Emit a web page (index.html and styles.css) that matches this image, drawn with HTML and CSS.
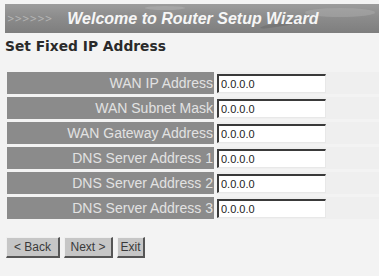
FILE: index.html
```html
<!DOCTYPE html>
<html>
<head>
<meta charset="utf-8">
<link rel="stylesheet" href="styles.css">
</head>
<body>
<div class="page">
  <div class="banner">
    <span class="arrows">&gt;&gt;&gt;&gt;&gt;&gt;</span>
    <span class="title">Welcome to Router Setup Wizard</span>
    <span class="streak s1"></span>
    <span class="streak s2"></span>
    <span class="streak s3"></span>
  </div>
  <h1 class="heading">Set Fixed IP Address</h1>
  <div class="form">
    <div class="row"><div class="label">WAN IP Address</div><div class="field"><input class="ip" value="0.0.0.0"></div></div>
    <div class="row"><div class="label">WAN Subnet Mask</div><div class="field"><input class="ip" value="0.0.0.0"></div></div>
    <div class="row"><div class="label">WAN Gateway Address</div><div class="field"><input class="ip" value="0.0.0.0"></div></div>
    <div class="row"><div class="label">DNS Server Address 1</div><div class="field"><input class="ip" value="0.0.0.0"></div></div>
    <div class="row"><div class="label">DNS Server Address 2</div><div class="field"><input class="ip" value="0.0.0.0"></div></div>
    <div class="row"><div class="label">DNS Server Address 3</div><div class="field"><input class="ip" value="0.0.0.0"></div></div>
  </div>
  <div class="buttons">
    <button class="btn b-back">&lt; Back</button>
    <button class="btn b-next">Next &gt;</button>
    <button class="btn b-exit">Exit</button>
  </div>
</div>
</body>
</html>
```
FILE: styles.css
```css
html, body {
  margin: 0;
  padding: 0;
  background: #f3f3f3;
}
.page {
  width: 379px;
  height: 276px;
  padding: 4px 0 0 5px;
  box-sizing: border-box;
  overflow: hidden;
  font-family: "Liberation Sans", Arial, sans-serif;
}
.banner {
  position: relative;
  height: 29px;
  display: flex;
  align-items: center;
  background: linear-gradient(180deg, #9c9c9c 0%, #8c8c8c 45%, #7e7e7e 100%);
  overflow: hidden;
  white-space: nowrap;
}
.arrows {
  margin-left: 2px;
  font-size: 10px;
  color: #b4b4b4;
  font-family: "DejaVu Sans", sans-serif;
  transform: scaleX(0.9);
  transform-origin: left;
}
.title {
  margin-left: 10px;
  font-size: 16px;
  font-weight: bold;
  font-style: italic;
  color: #f6f6f6;
  font-family: "Liberation Sans", Arial, sans-serif;
  position: relative;
  z-index: 1;
  white-space: nowrap;
}
.streak {
  position: absolute;
  border-radius: 50%;
}
.s1 { left: 255px; top: 18px; width: 45px; height: 4px; background: #6c6c6c; opacity: 0.6; transform: rotate(-10deg); }
.s2 { left: 300px; top: 4px; width: 70px; height: 9px; background: #b0b0b0; opacity: 0.45; }
.s3 { left: 140px; top: 2px; width: 40px; height: 4px; background: #b4b4b4; opacity: 0.5; }
.heading {
  margin: 4px 0 0 0;
  font-family: "DejaVu Sans", Verdana, sans-serif;
  font-weight: bold;
  font-size: 13.8px;
  color: #2a2a2a;
  height: 18px;
  line-height: 18px;
  white-space: nowrap;
}
.form {
  margin: 17px 0 0 2px;
  display: grid;
  row-gap: 3px;
}
.row {
  display: grid;
  grid-template-columns: 207px 1fr;
  column-gap: 3px;
  height: 22px;
}
.label {
  background: #8b8b8b;
  color: #e2e2e2;
  font-size: 14px;
  text-align: right;
  line-height: 22px;
  padding-right: 1px;
  white-space: nowrap;
}
.field {
  background: #efefef;
  display: flex;
  align-items: center;
}
.ip {
  width: 109px;
  height: 19px;
  box-sizing: border-box;
  margin: 0;
  padding: 0 0 0 2px;
  border-style: solid;
  border-width: 2px 1px 1px 2px;
  border-color: #3a3a3a #e8e8e8 #e8e8e8 #3a3a3a;
  background: #ffffff;
  font-family: "Liberation Sans", Arial, sans-serif;
  font-size: 11px;
  color: #222;
  outline: none;
}
.buttons {
  margin: 18px 0 0 1px;
  display: flex;
  gap: 4px;
}
.btn {
  height: 21px;
  margin: 0;
  padding: 0;
  box-sizing: border-box;
  background: #c6c6c6;
  border-style: solid;
  border-width: 1px 2px 2px 1px;
  border-color: #efefef #555 #555 #efefef;
  font-family: "Liberation Sans", Arial, sans-serif;
  font-size: 12px;
  color: #3a3a3a;
}
.b-back { width: 54px; }
.b-next { width: 49px; }
.b-exit { width: 28px; }
```
